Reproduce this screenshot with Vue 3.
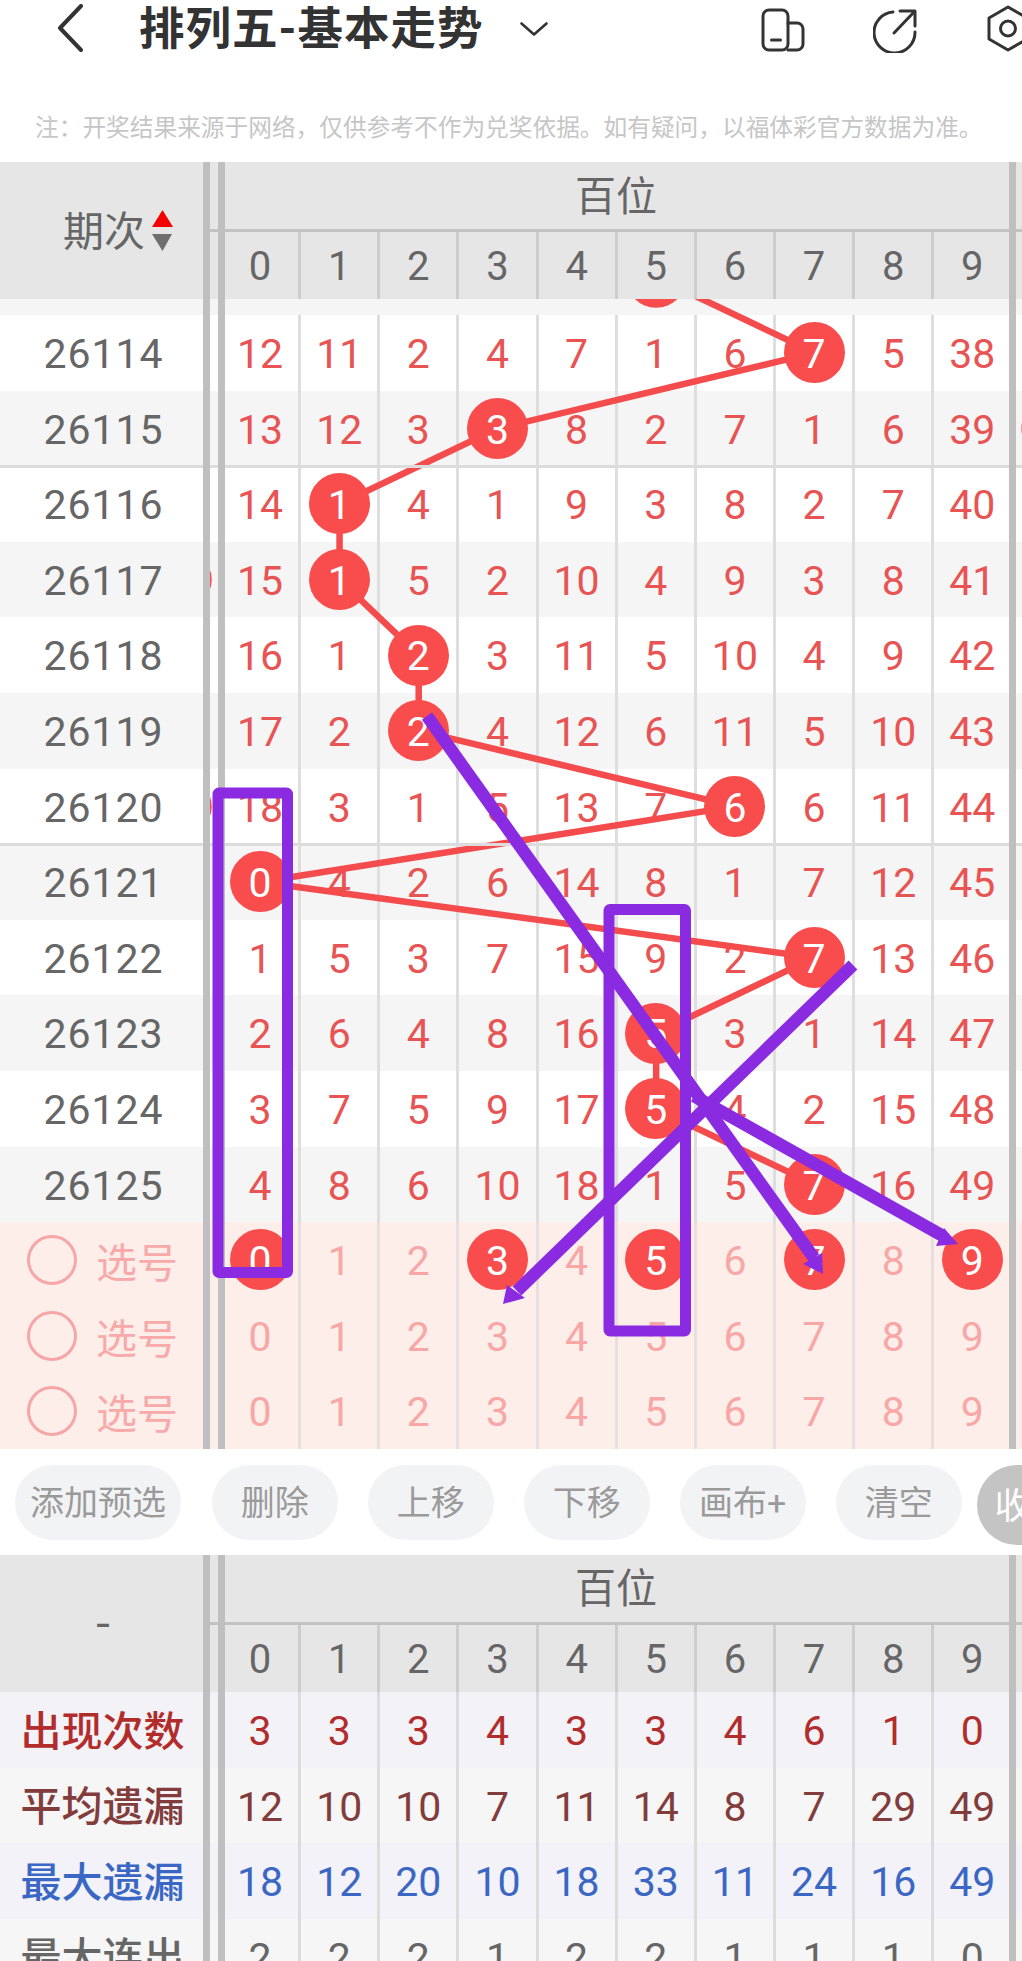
<script setup>
const digits = [0, 1, 2, 3, 4, 5, 6, 7, 8, 9]

const note = '注\uFF1A开奖结果来源于网络\uFF0C仅供参考不作为兑奖依据。如有疑问\uFF0C以福体彩官方数据为准。'

const rows = [
  { id: 26114, cells: [12, 11, 2, 4, 7, 1, 6, 7, 5, 38], hit: 7 },
  { id: 26115, cells: [13, 12, 3, 3, 8, 2, 7, 1, 6, 39], hit: 3 },
  { id: 26116, cells: [14, 1, 4, 1, 9, 3, 8, 2, 7, 40], hit: 1, sep: true },
  { id: 26117, cells: [15, 1, 5, 2, 10, 4, 9, 3, 8, 41], hit: 1 },
  { id: 26118, cells: [16, 1, 2, 3, 11, 5, 10, 4, 9, 42], hit: 2 },
  { id: 26119, cells: [17, 2, 2, 4, 12, 6, 11, 5, 10, 43], hit: 2 },
  { id: 26120, cells: [18, 3, 1, 5, 13, 7, 6, 6, 11, 44], hit: 6 },
  { id: 26121, cells: [0, 4, 2, 6, 14, 8, 1, 7, 12, 45], hit: 0, sep: true },
  { id: 26122, cells: [1, 5, 3, 7, 15, 9, 2, 7, 13, 46], hit: 7 },
  { id: 26123, cells: [2, 6, 4, 8, 16, 5, 3, 1, 14, 47], hit: 5 },
  { id: 26124, cells: [3, 7, 5, 9, 17, 5, 4, 2, 15, 48], hit: 5 },
  { id: 26125, cells: [4, 8, 6, 10, 18, 1, 5, 7, 16, 49], hit: 7 }
]

const picks = [[0, 3, 5, 7, 9], [], []]

const stats = [
  { label: '出现次数', kind: 's1', values: [3, 3, 3, 4, 3, 3, 4, 6, 1, 0] },
  { label: '平均遗漏', kind: 's2', values: [12, 10, 10, 7, 11, 14, 8, 7, 29, 49] },
  { label: '最大遗漏', kind: 's3', values: [18, 12, 20, 10, 18, 33, 11, 24, 16, 49] },
  { label: '最大连出', kind: 's4', values: [2, 2, 2, 1, 2, 2, 1, 1, 1, 0] }
]

const tools = [
  { label: '添加预选', wide: true },
  { label: '删除' },
  { label: '上移' },
  { label: '下移' },
  { label: '画布+' },
  { label: '清空' }
]

const cx = (col) => 260.4 + 79.15 * col
const cy = (row) => 352.8 + 75.6 * row

const trail = [`${cx(5)},${cy(-1)}`]
  .concat(rows.map((r, i) => `${cx(r.hit)},${cy(i)}`))
  .join(' ')

const strays = [
  { x: cx(-1), y: cy(3) },
  { x: cx(-1), y: cy(6) },
  { x: cx(10), y: cy(1) },
  { x: cx(5), y: cy(-1) }
]
</script>

<template>
  <div class="page">
    <header class="nav">
      <svg class="back" viewBox="0 0 26 48" aria-hidden="true">
        <path d="M24 2 3 24l21 22" />
      </svg>
      <h1 class="title">排列五-基本走势</h1>
      <svg class="caret" viewBox="0 0 28 14" aria-hidden="true">
        <path d="M1.5 1.5 14 12.5 26.5 1.5" />
      </svg>
      <svg class="ico ico-phone" viewBox="0 0 44 44" aria-hidden="true">
        <rect x="2" y="2" width="25" height="40" rx="6" />
        <path d="M27 15h9a6 6 0 0 1 6 6v15a6 6 0 0 1-6 6H27" />
        <path d="M10.5 32h9" />
      </svg>
      <svg class="ico ico-share" viewBox="0 0 44 46" aria-hidden="true">
        <path d="M20 5A20.5 20.5 0 1 0 42 25" />
        <path d="M21 26 41 5" />
        <path d="M27 4h15v15" />
      </svg>
      <svg class="ico ico-gear" viewBox="0 0 44 48" aria-hidden="true">
        <path d="M22 3 41 14v21L22 46 3 35V14Z" />
        <circle cx="22" cy="24.5" r="7.5" />
      </svg>
    </header>

    <p class="note">{{ note }}</p>

    <section class="table">
      <div class="head">
        <div class="corner">
          <span class="corner-text">期次</span>
          <svg class="sort" viewBox="0 0 21 41" aria-hidden="true">
            <polygon points="10.500,0 21,17 0,17" fill="#f30000" />
            <polygon points="0,24 20,24 10.500,41" fill="#6e6e6e" />
          </svg>
        </div>
        <div class="head-title"><span class="title-text">百位</span></div>
        <div class="head-pad"></div>
        <div v-for="d in digits" :key="d" class="head-digit">{{ d }}</div>
        <div class="head-pad"></div>
      </div>

      <div class="body">
        <svg class="lines" viewBox="0 299 1022 1150" aria-hidden="true">
          <polyline :points="trail" />
          <circle v-for="(s, i) in strays" :key="i" :cx="s.x" :cy="s.y" r="30.500" />
        </svg>
        <div class="sliver"></div>
        <div
          v-for="(r, i) in rows"
          :key="r.id"
          class="row"
          :class="{ odd: i % 2 === 1, sep: r.sep }"
        >
          <div class="period">{{ r.id }}</div>
          <div></div>
          <div v-for="(c, j) in r.cells" :key="j" class="cell">
            <span v-if="j === r.hit" class="ball">{{ c }}</span>
            <template v-else>{{ c }}</template>
          </div>
        </div>
        <div v-for="(p, i) in picks" :key="'p' + i" class="row pick">
          <div class="period picker">
            <span class="radio"></span>
            <span>选号</span>
          </div>
          <div></div>
          <div v-for="d in digits" :key="d" class="cell">
            <span v-if="p.includes(d)" class="ball">{{ d }}</span>
            <template v-else>{{ d }}</template>
          </div>
        </div>
      </div>

      <div class="rails"><i class="r1"></i><i class="r2"></i><i class="r3"></i></div>
    </section>

    <div class="tools">
      <button v-for="t in tools" :key="t.label" class="tool" :class="{ wide: t.wide }">{{ t.label }}</button>
      <button class="tool fold">收起</button>
    </div>

    <section class="table stats">
      <div class="head">
        <div class="corner dash">-</div>
        <div class="head-title"><span class="title-text">百位</span></div>
        <div class="head-pad"></div>
        <div v-for="d in digits" :key="d" class="head-digit">{{ d }}</div>
        <div class="head-pad"></div>
      </div>
      <div v-for="s in stats" :key="s.label" class="row stat" :class="s.kind">
        <div class="period"><span class="stat-label">{{ s.label }}</span></div>
        <div></div>
        <div v-for="(v, j) in s.values" :key="j" class="cell">{{ v }}</div>
      </div>
      <div class="rails"><i class="r1"></i><i class="r2"></i><i class="r3"></i></div>
    </section>

    <svg class="marks" viewBox="0 0 1022 1961" aria-hidden="true">
      <rect x="218" y="793" width="69.500" height="479.500" rx="1" />
      <rect x="609" y="909.500" width="76.500" height="421.500" rx="1" />
      <path class="shaft" d="M427 716 814 1258" />
      <path class="shaft" d="M853 965 517 1291" />
      <path class="shaft" d="M694 1096 943 1236" />
      <polygon class="head-fill" points="823,1274 803,1264 822,1253" />
      <polygon class="head-fill" points="958,1244 936,1246 944,1228" />
      <polygon class="head-fill" points="503,1304 507,1285 525,1298" />
    </svg>
  </div>
</template>

<style scoped>
.page {
  position: relative;
  width: 1022px;
  height: 1961px;
  overflow: hidden;
  background: #fff;
  font-family: Roboto, "Noto Sans CJK SC", sans-serif;
  color: #666;
}

.nav {
  display: flex;
  align-items: center;
  height: 56px;
  padding-left: 57px;
}
.nav svg {
  flex: none;
  fill: none;
  stroke: #333;
  stroke-linecap: round;
  stroke-linejoin: round;
}
.back {
  width: 26px;
  height: 48px;
  stroke-width: 4px;
}
.title {
  margin: 3px 0 0 56px;
  font-size: 45.5px;
  line-height: 56px;
  font-weight: 700;
  color: #333;
  white-space: nowrap;
  letter-spacing: 1px;
}
.caret {
  width: 28px;
  height: 14px;
  margin-left: 37px;
  margin-top: 2px;
  stroke-width: 2.6px;
}
.ico {
  stroke-width: 3px;
}
.ico-phone {
  width: 44px;
  height: 44px;
  margin-left: 213px;
  margin-top: 3px;
}
.ico-share {
  width: 44px;
  height: 46px;
  margin-left: 68px;
  margin-top: 3px;
}
.ico-gear {
  width: 44px;
  height: 48px;
  margin-left: 69px;
}

.note {
  margin: 0;
  padding: 57px 0 19px 35px;
  font-size: 23.7px;
  line-height: 30px;
  color: #c6c6c6;
  white-space: nowrap;
}

.table {
  position: relative;
}

.head {
  position: relative;
  z-index: 8;
  display: grid;
  grid-template-columns: 203px 19px repeat(10, 79.15px) 1fr;
  grid-template-rows: 70px 67px;
  background: #e6e6e6;
}
.corner {
  grid-column: 1;
  grid-row: 1 / 3;
  display: flex;
  align-items: center;
  padding-left: 63px;
  font-size: 41px;
}
.corner-text,
.title-text {
  position: relative;
  top: -3px;
}
.sort {
  width: 21px;
  height: 41px;
  margin-left: 7px;
  margin-top: -1px;
}
.dash {
  padding-left: 95px;
  padding-bottom: 10px;
  font-size: 46px;
  font-family: "Noto Sans CJK SC", sans-serif;
}
.head-title {
  grid-column: 2 / -1;
  grid-row: 1;
  box-sizing: border-box;
  border-bottom: 3px solid #c2c2c2;
  display: flex;
  align-items: center;
  justify-content: center;
  padding-left: 7px;
  font-size: 41px;
}
.head-digit {
  box-sizing: border-box;
  display: flex;
  align-items: center;
  justify-content: center;
  border-right: 3px solid #cdcdcd;
  padding-top: 2px;
  font-size: 40px;
  color: #666;
}

.body {
  position: relative;
}
.lines {
  position: absolute;
  left: 0;
  top: 0;
  width: 1022px;
  height: 1150px;
  z-index: 1;
}
.lines polyline {
  fill: none;
  stroke: #f44b4c;
  stroke-width: 6.5px;
}
.lines circle {
  fill: #f94c4c;
}
.sliver {
  height: 16px;
  background: #f5f5f5;
}

.row {
  position: relative;
  display: grid;
  grid-template-columns: 203px 19px repeat(10, 79.15px) 1fr;
  height: 75.6px;
  background: #fff;
  font-size: 41px;
}
.row.odd {
  background: #f5f5f5;
}
.row.sep::before {
  content: "";
  position: absolute;
  left: 0;
  right: 0;
  top: -1.500px;
  height: 3px;
  background: #dcdcdc;
  z-index: 5;
}
.period {
  position: relative;
  z-index: 4;
  box-sizing: border-box;
  display: flex;
  align-items: center;
  justify-content: center;
  padding: 2.5px 0 0 4px;
  background: inherit;
  color: #666;
  font-size: 41px;
  letter-spacing: 1px;
}
.cell {
  box-sizing: border-box;
  display: flex;
  align-items: center;
  justify-content: center;
  padding-top: 2.5px;
  border-right: 3px solid #dedede;
  color: #e85353;
}
.ball {
  position: relative;
  z-index: 2;
  flex: none;
  box-sizing: border-box;
  width: 61px;
  height: 61px;
  margin-top: -2.5px;
  padding-top: 2.5px;
  border-radius: 50%;
  background: #f94c4c;
  color: #fff;
  display: flex;
  align-items: center;
  justify-content: center;
}

.pick {
  background: #fdeee9;
}
.pick .cell {
  color: #f8a6a6;
  border-right-color: #e5e0dd;
}
.pick .ball {
  color: #fff;
}
.picker {
  gap: 19px;
  justify-content: flex-start;
  padding: 0 0 0 27px;
  letter-spacing: 0;
  color: #f8a9a9;
}
.radio {
  flex: none;
  box-sizing: border-box;
  width: 50px;
  height: 50px;
  border: 3px solid #f6a6a6;
  border-radius: 50%;
}

.rails {
  position: absolute;
  inset: 0;
  z-index: 9;
  pointer-events: none;
}
.rails i {
  position: absolute;
  top: 0;
  bottom: 0;
  background: #bfbfbf;
}
.r1 {
  left: 203px;
  width: 7px;
}
.r2 {
  left: 218px;
  width: 6.500px;
}
.r3 {
  left: 1009px;
  width: 6.500px;
}

.tools {
  display: flex;
  align-items: flex-start;
  height: 106px;
  box-sizing: border-box;
  padding: 16px 0 0 15px;
  gap: 29.500px;
  overflow: hidden;
  white-space: nowrap;
}
.tool {
  flex: none;
  width: 126.500px;
  height: 75px;
  padding: 0 0 4px;
  border: 0;
  border-radius: 38px;
  background: #f2f3f5;
  color: #9a9a9a;
  font-family: inherit;
  font-size: 34px;
}
.tool.wide {
  width: 166px;
  margin-right: 1px;
}
.tool.fold {
  width: 120px;
  height: 80px;
  margin-left: -15px;
  padding: 0 0 4px 18px;
  border-radius: 40px;
  background: #c4c4c4;
  color: #fff;
  text-align: left;
  font-size: 36px;
}

.stats {
  height: 406px;
  overflow: hidden;
}
.stat .period {
  padding: 0 0 0 2px;
  font-size: 41px;
  letter-spacing: 0;
  font-weight: 500;
}
.stat-label {
  position: relative;
  top: -2px;
}
.stat .cell {
  border-right-color: #dcdcdc;
}
.s1 {
  background: #f2f2f7;
}
.s1 .period,
.s1 .cell {
  color: #b22c2c;
}
.s2 {
  background: #f6f6f6;
}
.s2 .period,
.s2 .cell {
  color: #823c3c;
}
.s3 {
  background: #f2f2f8;
}
.s3 .period,
.s3 .cell {
  color: #3b67c4;
}
.s4 {
  background: #f6f6f6;
}
.s4 .period,
.s4 .cell {
  color: #666;
}

.marks {
  position: absolute;
  left: 0;
  top: 0;
  width: 1022px;
  height: 1961px;
  z-index: 20;
  pointer-events: none;
  fill: none;
  stroke: #8a2be2;
  stroke-width: 11px;
  stroke-linejoin: round;
}
.marks .shaft {
  stroke-width: 12.5px;
}
.marks .head-fill {
  fill: #8a2be2;
  stroke: none;
}
</style>
